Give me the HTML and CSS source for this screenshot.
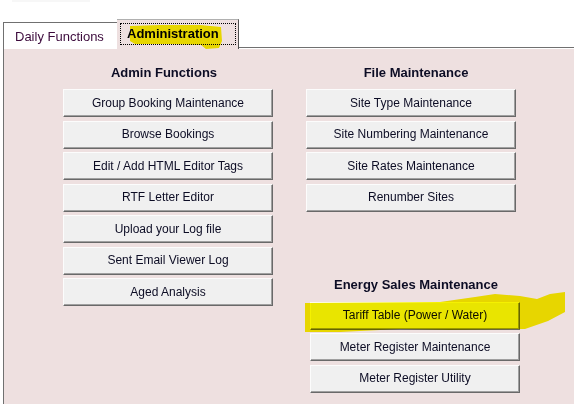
FILE: index.html
```html
<!DOCTYPE html>
<html lang="en">
<head>
    <meta charset="UTF-8">
    <title>Administration</title>
    <link rel="stylesheet" href="styles.css">
</head>
<body>
    <div class="top-strip"></div>
    <div class="tabs">
        <div class="tab tab-daily">Daily Functions</div>
        <div class="tab tab-admin"><span class="focus">Administration</span></div>
        <div class="tab-fill"></div>
    </div>
    <div class="panel">
        <div class="col col-admin">
            <h2 class="heading">Admin Functions</h2>
            <div class="btn-list">
                <button class="btn">Group Booking Maintenance</button>
                <button class="btn">Browse Bookings</button>
                <button class="btn">Edit / Add HTML Editor Tags</button>
                <button class="btn">RTF Letter Editor</button>
                <button class="btn">Upload your Log file</button>
                <button class="btn">Sent Email Viewer Log</button>
                <button class="btn">Aged Analysis</button>
            </div>
        </div>
        <div class="col col-file">
            <h2 class="heading">File Maintenance</h2>
            <div class="btn-list">
                <button class="btn">Site Type Maintenance</button>
                <button class="btn">Site Numbering Maintenance</button>
                <button class="btn">Site Rates Maintenance</button>
                <button class="btn">Renumber Sites</button>
            </div>
            <div class="energy">
                <h2 class="heading">Energy Sales Maintenance</h2>
                <div class="btn-list">
                    <button class="btn">Tariff Table (Power / Water)</button>
                    <button class="btn">Meter Register Maintenance</button>
                    <button class="btn">Meter Register Utility</button>
                </div>
            </div>
        </div>
    </div>

    <!-- highlighter marks -->
    <svg class="marks" width="574" height="404" viewBox="0 0 574 404">
        <path d="M130,26 L160,25 L200,25 L221,27 L222,41 L219,48 L206,49 L201,45 L170,44 L135,44 L130,41 Z"/>
        <path d="M305,303 L440,302 L475,297 L495,294 L520,296 L537,299 L550,294 L565,292 L565,312 L548,321 L525,329 L450,330 L400,329 L340,332 L305,332 Z"/>
    </svg>
</body>
</html>
```

FILE: styles.css
```css
/* Page */
body {
    margin: 0;
    width: 574px;
    height: 404px;
    overflow: hidden;
    background-color: #ffffff;
    font-family: "Liberation Sans", Arial, sans-serif;
    position: relative;
}

.top-strip {
    margin-left: 12px;
    width: 78px;
    height: 2px;
    background-color: #f7f7f7;
}

/* Tabs */
.tabs {
    display: flex;
    align-items: flex-end;
    margin-top: 17px;
    padding-left: 3px;
    height: 30px;
}

.tab {
    box-sizing: border-box;
    font-size: 13px;
    display: flex;
    align-items: center;
}

.tab-daily {
    width: 114px;
    height: 27px;
    border-top: 1px solid #707070;
    border-left: 1px solid #707070;
    background-color: #ffffff;
    color: #3c0a3c;
    padding-left: 11px;
    padding-top: 1px;
}

.tab-admin {
    width: 122px;
    height: 30px;
    border-top: 1px solid #b0b0b0;
    border-right: 1px solid #505050;
    background-color: #eee0e0;
    padding-left: 3px;
    padding-top: 3px;
    align-items: flex-start;
}

.focus {
    display: block;
    width: 116px;
    height: 22px;
    box-sizing: border-box;
    border: 1px dotted #000000;
    font-weight: bold;
    color: #000000;
    padding-left: 6px;
    line-height: 19px;
}

.tab-fill {
    flex: 1;
    height: 1px;
    margin-bottom: 1px;
    background-color: #707070;
}

/* Panel */
.panel {
    display: flex;
    gap: 33px;
    height: 355px;
    margin-left: 3px;
    border-left: 1px solid #707070;
    background-color: #eee0e0;
    padding-left: 59px;
}

.col {
    width: 210px;
    display: flex;
    flex-direction: column;
}

.heading {
    margin: 16px 0 8px 0;
    font-size: 13px;
    line-height: 16px;
    font-weight: bold;
    text-align: center;
    color: #0c0c24;
}

.col-admin > .heading {
    padding-right: 8px;
}

.col-file > .heading {
    padding-left: 10px;
}

.btn-list {
    display: flex;
    flex-direction: column;
    gap: 3.5px;
}

/* Buttons */
.btn {
    box-sizing: border-box;
    height: 28px;
    width: 210px;
    margin: 0;
    padding: 0 0 1px 0;
    font-family: "Liberation Sans", Arial, sans-serif;
    font-size: 12px;
    color: #0c0c24;
    background-color: #f0f0f0;
    border: 1px solid;
    border-color: #fcfcfc #696969 #696969 #fcfcfc;
    box-shadow: inset -1px -1px 0 #a0a0a0;
}

.energy {
    margin-left: 4px;
    margin-top: 65px;
}

.energy .heading {
    margin: 0 0 9px 0;
    padding-left: 6px;
}

/* Highlighter */
.marks {
    position: absolute;
    left: 0;
    top: 0;
    pointer-events: none;
    mix-blend-mode: multiply;
}

.marks path {
    fill: #f8f400;
}
```
